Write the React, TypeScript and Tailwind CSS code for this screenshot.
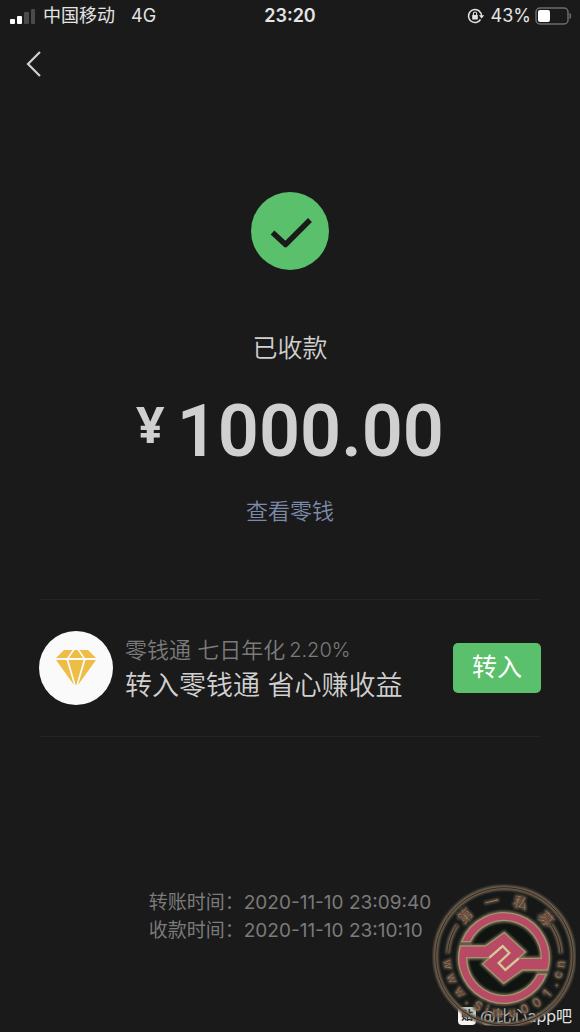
const records = [
  { label: "转账时间：", value: "2020-11-10 23:09:40" },
  { label: "收款时间：", value: "2020-11-10 23:10:10" },
];

// characters round the seal, with their angle in degrees
const sealTop: [string, number][] = [["第", -44], ["一", -13], ["私", 17], ["募", 48]];
const sealBottom: [string, number][] = [
  ["w", 82], ["w", 67], ["w", 51], [".", 39], ["S", 28], ["i", 18], ["m", 7],
  ["u", -8], ["0", -21], ["0", -35], ["1", -49], [".", -61], ["c", -71], ["n", -82],
];

const sealHalf =
  "M105 212H180L237 172L300 230L240 284L220 263L252 233L232 212L192 247H124A112 112 0 0 0 337 297H363A136 136 0 0 1 105 212Z";
const sealArcs = "M67 235A170 170 0 0 1 97 147M377 147A170 170 0 0 1 407 235";

function StatusBar() {
  return (
    <header className="grid grid-cols-3 items-center h-8 px-2 text-lg leading-8 text-[#e4e4e4]">
      <div className="flex items-center gap-2 whitespace-nowrap">
        <svg width="27" height="16" viewBox="0 0 27 16" aria-hidden="true">
          <rect x="2" y="11" width="5" height="5" rx="1" fill="#fff" />
          <rect x="9" y="8" width="5" height="8" rx="1" fill="#fff" />
          <rect x="16" y="4" width="5" height="12" rx="1" fill="#4a4a4a" />
          <rect x="23" y="1" width="4" height="15" rx="1" fill="#4a4a4a" />
        </svg>
        <span>中国移动</span>
        <span className="ml-2">4G</span>
      </div>
      <time className="text-center font-semibold">23:20</time>
      <div className="flex items-center justify-end gap-1 whitespace-nowrap">
        <svg width="18" height="16" viewBox="0 0 18 16" fill="none" aria-hidden="true" className="mr-0.5">
          <path d="M12.600 3.400A6.500 6.500 0 1 0 13.500 11.500M14.500 8A6.500 6.500 0 0 0 12 2.800" stroke="#e4e4e4" strokeWidth="1.5" />
          <path d="M12 7.200h5.200l-2.600 3.400z" fill="#e4e4e4" />
          <rect x="5.200" y="7" width="5.600" height="4.500" rx=".5" fill="#e4e4e4" />
          <path d="M6.400 7V5.600a1.600 1.600 0 0 1 3.200 0V7" stroke="#e4e4e4" strokeWidth="1.1" />
        </svg>
        <span>43%</span>
        <svg width="37" height="18" viewBox="0 0 37 18" fill="none" aria-hidden="true">
          <rect x="1" y="1" width="32" height="16" rx="4" stroke="#6c6c6c" strokeWidth="1.5" />
          <rect x="3" y="3" width="12" height="12" rx="2" fill="#fff" />
          <path d="M35 6.500q1.600 2.500 0 5z" fill="#6c6c6c" stroke="#6c6c6c" />
        </svg>
      </div>
    </header>
  );
}

function Diamond() {
  return (
    <div className="flex items-center justify-center shrink-0 size-[74px] rounded-full bg-[#fafafa]">
      <svg width="42" height="38" viewBox="0 0 42 38" fill="#edbd45" aria-hidden="true">
        <path d="M9 1h8.500L12 9H1zM19.500 1h3L28 9H14zM24.500 1H33l8 8H30z" />
        <path d="M1 11h10.500l7.500 25zM13.500 11h15L21 37zM30.500 11H41L23 36z" />
      </svg>
    </div>
  );
}

function SealText() {
  return (
    <>
      {sealTop.map(([char, angle]) => (
        <text key={angle} x="237" y="90" fontSize="42" transform={`rotate(${angle} 237 243)`}>{char}</text>
      ))}
      {sealBottom.map(([char, angle]) => (
        <text key={angle} x="237" y="425" fontSize="36" transform={`rotate(${angle} 237 243)`}>{char}</text>
      ))}
    </>
  );
}

function Seal() {
  return (
    <svg viewBox="20 20 432 432" className="size-36" role="img" aria-label="第一私募 www.Simu001.cn">
      <defs>
        <filter id="seal-glow" x="-10%" y="-10%" width="120%" height="120%">
          <feGaussianBlur stdDeviation="3" />
        </filter>
      </defs>
      <circle cx="237" cy="243" r="206" fill="#0c120e" fillOpacity="0.2" />
      <circle cx="236" cy="248" r="136" fill="#0e1410" fillOpacity="0.8" />
      <g fill="none" stroke="#6d634f" filter="url(#seal-glow)">
        <circle cx="237" cy="243" r="206" strokeWidth="15" />
        <path d={sealArcs} strokeWidth="14" />
        <g strokeWidth="12">
          <path d={sealHalf} />
          <path d={sealHalf} transform="rotate(180 236 248)" />
        </g>
        <g strokeWidth="8" strokeOpacity="0.7" textAnchor="middle">
          <SealText />
        </g>
      </g>
      <g fill="none" stroke="#3d211f" strokeWidth="3">
        <circle cx="237" cy="243" r="206" />
        <path d={sealArcs} />
      </g>
      <g fill="#b84a66" stroke="#a3946f" strokeWidth="4">
        <path d={sealHalf} />
        <path d={sealHalf} transform="rotate(180 236 248)" />
      </g>
      <path d="M192 247L232 212L252 233L220 263L240 284L280 249" fill="none" stroke="#d6c797" strokeWidth="7" />
      <g fill="#a98a69" stroke="#55302a" strokeWidth="1" textAnchor="middle">
        <SealText />
      </g>
    </svg>
  );
}

export default function App() {
  return (
    <div className="relative min-h-screen bg-[#1a1a1a] font-['Inter','Noto_Sans_CJK_SC',sans-serif] text-[#d0d0d0]">
      <StatusBar />
      <nav className="flex items-center h-16 px-6">
        <button type="button" aria-label="返回" className="flex items-center justify-center w-5 h-8">
          <svg width="18" height="28" viewBox="0 0 18 28" fill="none" stroke="#d0d0d0" strokeWidth="2.200" aria-hidden="true">
            <path d="M15 2 3 14l12 12" />
          </svg>
        </button>
      </nav>

      <main className="px-[39px] pt-24">
        <section className="flex flex-col items-center">
          <svg width="78" height="78" viewBox="0 0 78 78" fill="none" aria-hidden="true">
            <circle cx="39" cy="39" r="39" fill="#5bc06b" />
            <path d="m21.500 40.500 13 12L59 28" stroke="#1a1a1a" strokeWidth="5.500" strokeLinejoin="round" />
          </svg>
          <h1 className="mt-15 text-[25px] leading-9 font-[350]">已收款</h1>
          <p className="flex items-start gap-3 mt-[18px] whitespace-nowrap">
            <span className="pt-3 font-['Open_Sans',sans-serif] text-[50px] leading-[56px] font-bold">¥</span>
            <span className="font-['Roboto',sans-serif] text-[72px] leading-[95px] font-semibold">1000.00</span>
          </p>
          <a href="#balance" className="mt-4 text-[22px] leading-8 font-[350] text-[#7d8aa9]">查看零钱</a>
        </section>

        <section className="flex items-center mt-18 h-[138px] border-y border-[#232323]">
          <Diamond />
          <div className="flex-1 min-w-0 ml-3 whitespace-nowrap">
            <p className="flex items-center gap-1 text-[22px] leading-9 font-[350] text-[#7b7b7b]">
              <span>零钱通 七日年化</span>
              <span className="text-xl leading-9">2.20%</span>
            </p>
            <p className="text-[27px] leading-9 font-[350]">转入零钱通 省心赚收益</p>
          </div>
          <button type="button" className="w-[88px] h-[50px] rounded-[5px] bg-[#5bc06b] text-[25px] text-white">转入</button>
        </section>

        <dl className="flex flex-col items-center pt-[152px] pb-18 text-[19px] leading-7 text-[#7b7b7b]">
          <div>
            {records.map((record) => (
              <div key={record.label} className="flex">
                <dt>{record.label}</dt>
                <dd>{record.value}</dd>
              </div>
            ))}
          </div>
        </dl>
      </main>

      <p className="absolute right-2 bottom-1 flex items-center gap-1 text-base leading-6 text-[#e4e4e4]">
        <span className="flex items-center justify-center size-[18px] rounded-sm bg-[#f4f4f4] text-xs font-bold text-[#1a1a1a]">贴</span>
        @比心app吧
      </p>
      <div className="absolute right-1 bottom-1.5">
        <Seal />
      </div>
    </div>
  );
}
